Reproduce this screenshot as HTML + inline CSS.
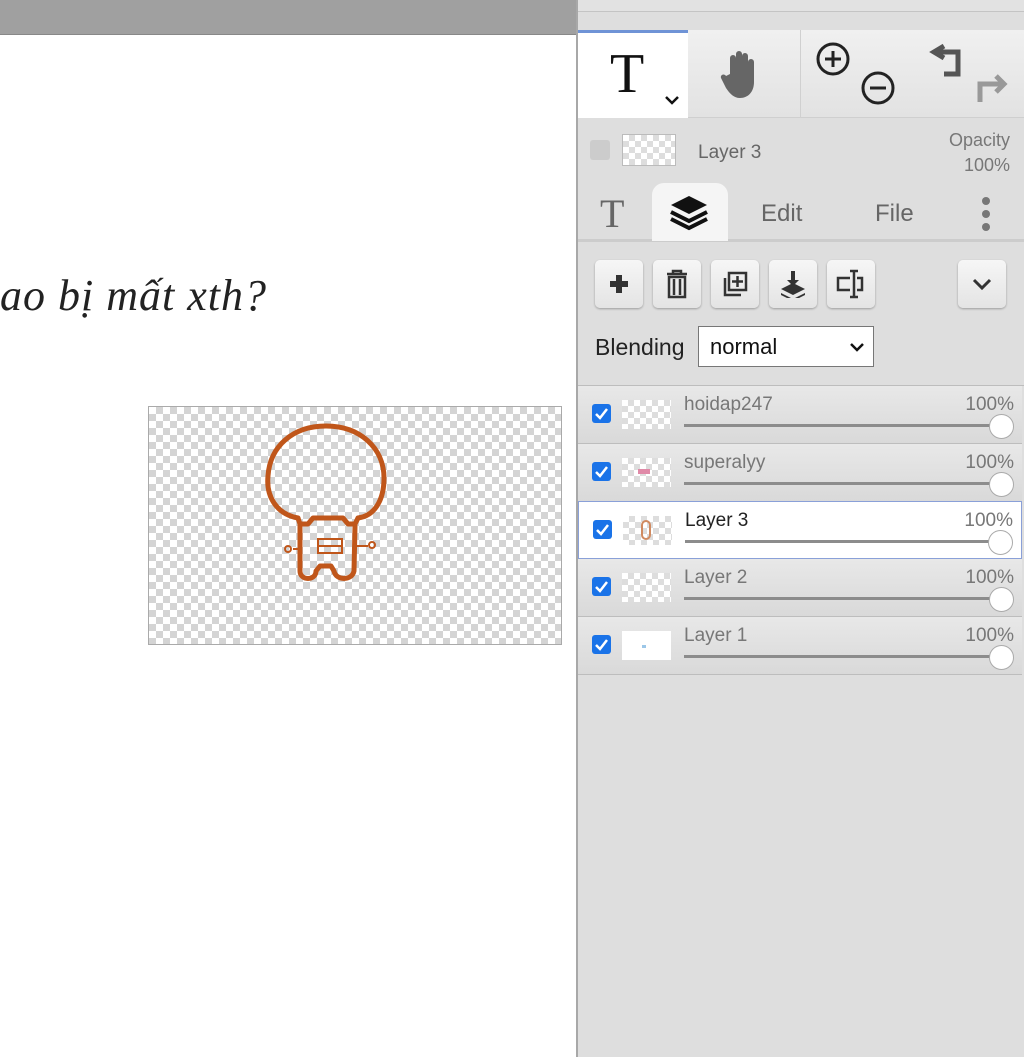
<!DOCTYPE html>
<html><head><meta charset="utf-8"><style>
*{margin:0;padding:0;box-sizing:border-box}
body{width:1024px;height:1057px;position:relative;overflow:hidden;background:#fff;font-family:"Liberation Sans","DejaVu Sans",sans-serif}
.abs{position:absolute}
.checker{background-color:#fff;background-image:linear-gradient(45deg,#d4d4d4 25%,transparent 25%,transparent 75%,#d4d4d4 75%),linear-gradient(45deg,#d4d4d4 25%,transparent 25%,transparent 75%,#d4d4d4 75%);background-size:14px 14px;background-position:0 0,7px 7px}
.tchk{background-color:#fff;background-image:linear-gradient(45deg,#ddd 25%,transparent 25%,transparent 75%,#ddd 75%),linear-gradient(45deg,#ddd 25%,transparent 25%,transparent 75%,#ddd 75%);background-size:12px 12px;background-position:0 0,6px 6px}
.btn{position:absolute;top:260px;width:48px;height:48px;border-radius:5px;background:linear-gradient(#f6f6f6,#e4e4e4);box-shadow:0 1px 2px rgba(0,0,0,.3);display:flex;align-items:center;justify-content:center}
.row{position:absolute;left:578px;width:444px;height:58px;background:linear-gradient(#e8e8e8,#d9d9d9);border-bottom:1px solid #bdbdbd}
.row.sel{background:#fff;border:1px solid #8aa0d8}
.cb{position:absolute;left:14px;top:18px;width:19px;height:19px;background:#1a73e8;border-radius:3px}
.cb svg{position:absolute;left:2px;top:2px}
.th{position:absolute;left:44px;top:14px;width:49px;height:29px}
.nm{position:absolute;left:106px;top:8px;font-size:19px;color:#777}
.sel .nm{color:#222}
.pc{position:absolute;right:8px;top:8px;font-size:19px;color:#777}
.sl{position:absolute;left:106px;right:20px;top:38px;height:3px;background:#8c8c8c}
.kn{position:absolute;right:8px;top:28px;width:25px;height:25px;border-radius:50%;background:#fff;border:1px solid #aaa}
</style></head><body>
<div class="abs" style="left:0;top:0;width:577px;height:35px;background:#a0a0a0;border-bottom:1px solid #888"></div>
<div class="abs" style="left:0;top:270px;font-family:'Liberation Serif',serif;font-style:italic;font-size:44px;color:#222;letter-spacing:1px">ao bị mất xth?</div>
<div class="abs checker" style="left:148px;top:406px;width:414px;height:239px;border:1px solid #aaa"></div>
<svg class="abs" style="left:148px;top:406px" width="414" height="239" viewBox="0 0 414 239">
<g fill="none" stroke="#c0561a" stroke-width="5" stroke-linecap="round" stroke-linejoin="round">
<path d="M150 112 C128 108 118 90 120 70 C122 40 145 20 178 20 C212 20 236 42 236 72 C236 95 226 110 210 112"/>
<path d="M150 112 L152 118 L160 118 L165 112 L195 112 L200 118 L207 118 L210 112"/>
<path d="M152 118 L152 165 C152 175 168 175 168 165 L172 160 L183 160 L186 165 C188 175 204 175 206 165 L207 120"/>
</g>
<g fill="none" stroke="#c0561a" stroke-width="2"><rect x="170" y="133" width="24" height="14"/><path d="M170 140H194"/><circle cx="140" cy="143" r="3"/><circle cx="224" cy="139" r="3"/><path d="M145 143H152M208 140H220"/></g>
</svg>
<div class="abs" style="left:576px;top:0;width:448px;height:1057px;background:#dedede;border-left:2px solid #a8a8a8"></div>
<div class="abs" style="left:578px;top:0;width:446px;height:12px;background:#e2e2e2;border-bottom:1px solid #c4c4c4"></div>
<div class="abs" style="left:578px;top:30px;width:446px;height:88px;background:linear-gradient(#f0f0f0,#e2e2e2);border-bottom:1px solid #cfcfcf"></div>
<div class="abs" style="left:578px;top:30px;width:110px;height:88px;background:#fff;border-top:3px solid #6f93d6"></div>
<div class="abs" style="left:800px;top:30px;width:1px;height:88px;background:#d0d0d0"></div>
<div class="abs" style="left:610px;top:42px;font-family:'Liberation Serif',serif;font-size:56px;color:#111">T</div>
<svg class="abs" style="left:664px;top:94px" width="16" height="12"><path d="M2 3L8 9L14 3" stroke="#111" stroke-width="2.5" fill="none"/></svg>
<svg class="abs" style="left:720px;top:48px" width="46" height="52" viewBox="0 0 46 52"><path d="M10 26V10a3 3 0 016 0V22V6a3 3 0 016 0V22V8a3 3 0 016 0V24V14a3 3 0 016 0V34C34 44 28 50 20 50C14 50 10 46 6 40L1 30C0 27 4 25 6 28Z" fill="#666"/></svg>
<svg class="abs" style="left:816px;top:42px" width="80" height="66"><g fill="none" stroke="#222" stroke-width="3"><circle cx="17" cy="17" r="15"/><path d="M9 17H25M17 9V25"/><circle cx="62" cy="46" r="15"/><path d="M54 46H70"/></g></svg>
<svg class="abs" style="left:926px;top:40px" width="84" height="66"><g fill="none" stroke-width="5"><path d="M8 12H32V34H18" stroke="#555"/><path d="M18 6L8 12L18 18" stroke="#555" fill="none"/><path d="M54 62V44H76" stroke="#999"/><path d="M70 36L78 44L70 52" stroke="#999"/></g></svg>
<div class="abs" style="left:590px;top:140px;width:20px;height:20px;background:#ccc;border-radius:3px"></div>
<div class="abs tchk" style="left:622px;top:134px;width:54px;height:32px;border:1px solid #bbb"></div>
<div class="abs" style="left:698px;top:142px;font-size:19px;color:#666">Layer 3</div>
<div class="abs" style="left:930px;top:128px;width:80px;text-align:right;font-size:18px;color:#777;line-height:25px">Opacity<br>100%</div>
<div class="abs" style="left:578px;top:239px;width:446px;height:3px;background:#ccc"></div>
<div class="abs" style="left:652px;top:183px;width:76px;height:58px;background:#f5f5f5;border-radius:12px 12px 0 0"></div>
<div class="abs" style="left:600px;top:190px;font-family:'Liberation Serif',serif;font-size:40px;color:#666">T</div>
<svg class="abs" style="left:668px;top:194px" width="42" height="38" viewBox="0 0 42 38"><path d="M21 2L39 11L21 20L3 11Z" fill="#111"/><path d="M3 18L21 27L39 18M3 25L21 34L39 25" stroke="#111" stroke-width="4" fill="none"/></svg>
<div class="abs" style="left:761px;top:200px;font-size:24px;color:#666">Edit</div>
<div class="abs" style="left:875px;top:200px;font-size:24px;color:#666">File</div>
<svg class="abs" style="left:978px;top:196px" width="16" height="36"><circle cx="8" cy="5" r="4" fill="#777"/><circle cx="8" cy="18" r="4" fill="#777"/><circle cx="8" cy="31" r="4" fill="#777"/></svg>
<div class="btn" style="left:595px"><svg width="24" height="24"><path d="M12 3V21M3 12H21" stroke="#333" stroke-width="6"/></svg></div>
<div class="btn" style="left:653px"><svg width="24" height="30"><g stroke="#333" stroke-width="2.5" fill="none"><path d="M2 5H22M8 5V2H16V5"/><rect x="4" y="8" width="16" height="20"/><path d="M9 10V26M15 10V26"/></g></svg></div>
<div class="btn" style="left:711px"><svg width="28" height="28"><g stroke="#333" stroke-width="2.5" fill="none"><rect x="8" y="3" width="17" height="17"/><path d="M4 8V25H20M16.5 6V17M11 11.5H22"/></g></svg></div>
<div class="btn" style="left:769px"><svg width="28" height="28"><g fill="#333"><path d="M12 1H16V10H20L14 16L8 10H12Z"/><path d="M2 19L14 13L26 19L14 25Z"/><path d="M2 23L14 29L26 23V25L14 31L2 25Z"/></g></svg></div>
<div class="btn" style="left:827px"><svg width="30" height="30"><g stroke="#333" stroke-width="2.5" fill="none"><path d="M14 9H2V21H14"/><path d="M18 2V28M14 2H22M14 28H22M21 9H26V21H21"/></g></svg></div>
<div class="btn" style="left:958px"><svg width="20" height="14"><path d="M2 3L10 11L18 3" stroke="#333" stroke-width="3" fill="none"/></svg></div>
<div class="abs" style="left:595px;top:334px;font-size:23px;color:#222">Blending</div>
<div class="abs" style="left:698px;top:326px;width:176px;height:41px;background:#fff;border:1px solid #777"></div>
<div class="abs" style="left:710px;top:334px;font-size:22px;color:#111">normal</div>
<svg class="abs" style="left:849px;top:341px" width="16" height="12"><path d="M2 3L8 9L14 3" stroke="#111" stroke-width="2.5" fill="none"/></svg>
<div class="abs" style="left:578px;top:385px;width:446px;height:1px;background:#bdbdbd"></div>
<div class="row" style="top:386px"><div class="cb"><svg width="15" height="15"><path d="M2 8L6 12L13 3" stroke="#fff" stroke-width="2.5" fill="none"/></svg></div><div class="th tchk"></div><div class="nm">hoidap247</div><div class="pc">100%</div><div class="sl"></div><div class="kn"></div></div>
<div class="row" style="top:444px"><div class="cb"><svg width="15" height="15"><path d="M2 8L6 12L13 3" stroke="#fff" stroke-width="2.5" fill="none"/></svg></div><div class="th tchk"><div style="position:absolute;left:16px;top:11px;width:12px;height:5px;background:#e08aa8"></div></div><div class="nm">superalyy</div><div class="pc">100%</div><div class="sl"></div><div class="kn"></div></div>
<div class="row sel" style="top:501px"><div class="cb"><svg width="15" height="15"><path d="M2 8L6 12L13 3" stroke="#fff" stroke-width="2.5" fill="none"/></svg></div><div class="th tchk"><div style="position:absolute;left:18px;top:4px;width:10px;height:20px;border:2px solid #d08a60;border-radius:5px"></div></div><div class="nm">Layer 3</div><div class="pc">100%</div><div class="sl"></div><div class="kn"></div></div>
<div class="row" style="top:559px"><div class="cb"><svg width="15" height="15"><path d="M2 8L6 12L13 3" stroke="#fff" stroke-width="2.5" fill="none"/></svg></div><div class="th tchk"></div><div class="nm">Layer 2</div><div class="pc">100%</div><div class="sl"></div><div class="kn"></div></div>
<div class="row" style="top:617px"><div class="cb"><svg width="15" height="15"><path d="M2 8L6 12L13 3" stroke="#fff" stroke-width="2.5" fill="none"/></svg></div><div class="th" style="background:#fff"><div style="position:absolute;left:20px;top:14px;width:4px;height:3px;background:#9cc7e8"></div></div><div class="nm">Layer 1</div><div class="pc">100%</div><div class="sl"></div><div class="kn"></div></div>
</body></html>
